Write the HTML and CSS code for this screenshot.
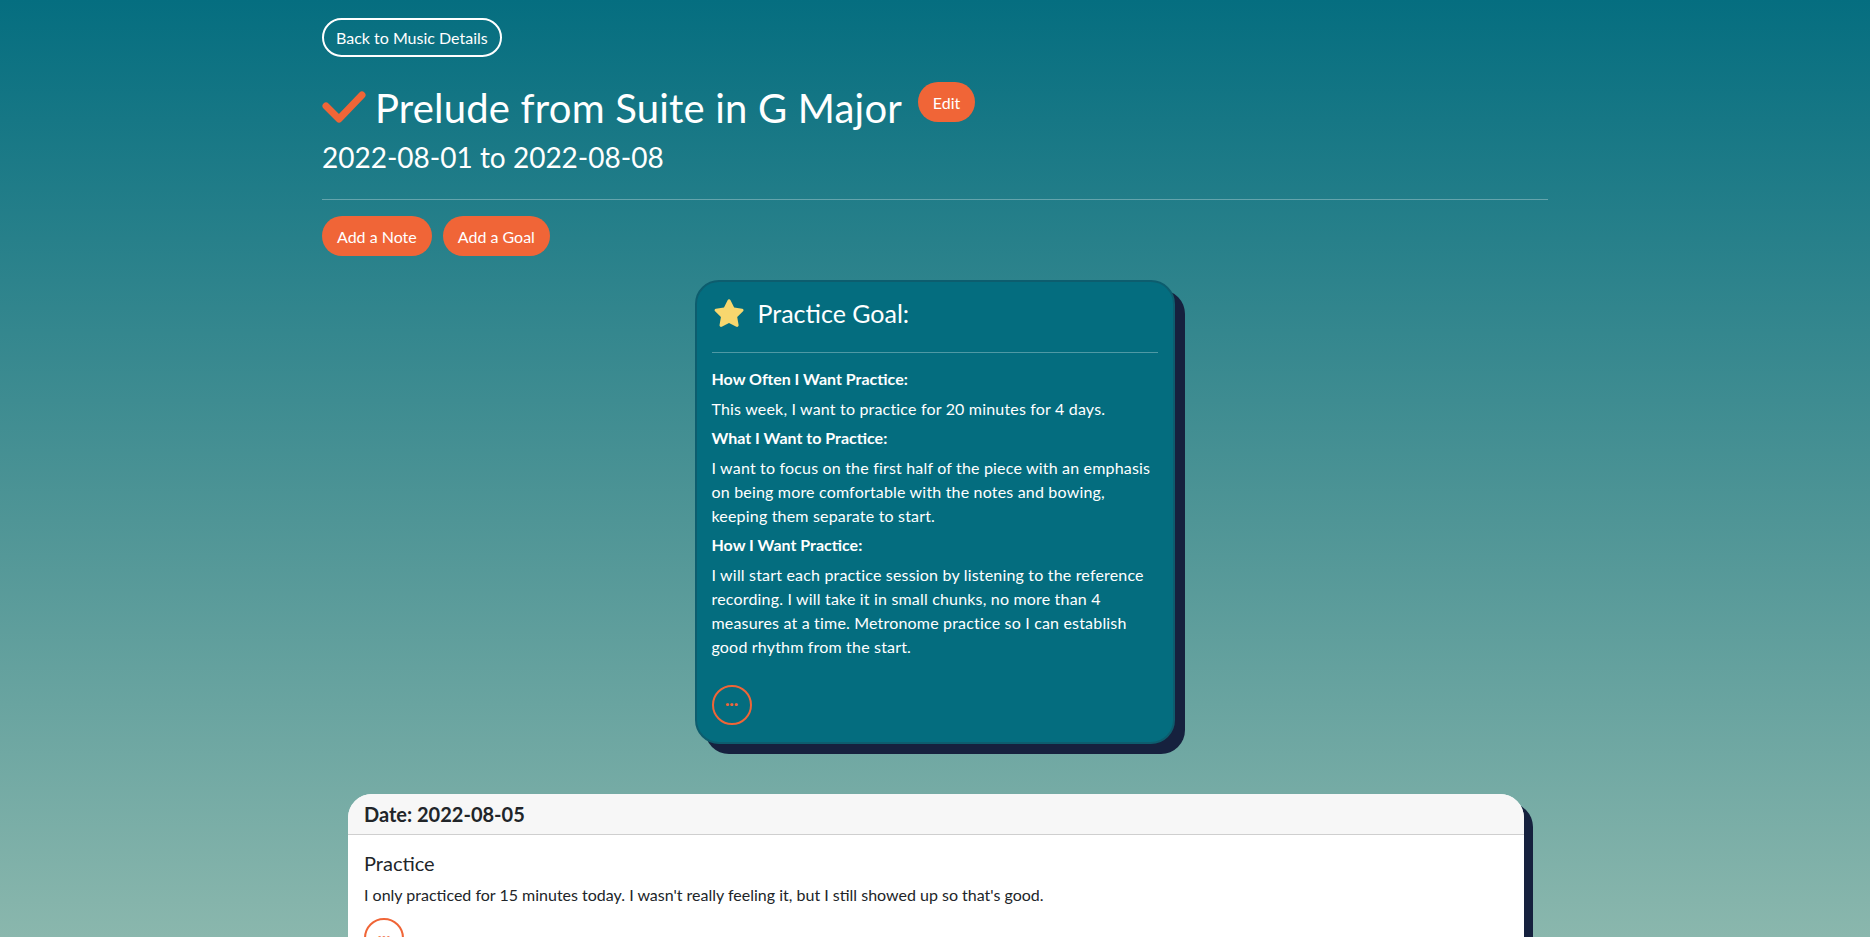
FILE: index.html
```html
<!DOCTYPE html>
<html lang="en">
<head>
<meta charset="utf-8">
<title>Prelude from Suite in G Major</title>
<link rel="stylesheet" href="styles.css">
</head>
<body>
<div class="page">
  <main class="container">
    <a class="btn-outline" href="#">Back to Music Details</a>
    <div class="title-row">
      <svg class="check" width="44" height="34" viewBox="0 0 44 34"><path d="M4 16 L17 29 L40 5" fill="none" stroke="#f06537" stroke-width="7" stroke-linecap="round" stroke-linejoin="round"/></svg>
      <h1 class="title">Prelude from Suite in G Major</h1>
      <a class="btn-orange edit" href="#">Edit</a>
    </div>
    <h2 class="dates">2022-08-01 to 2022-08-08</h2>
    <hr class="divider">
    <div class="actions">
      <a class="btn-orange action" href="#">Add a Note</a>
      <a class="btn-orange action" href="#">Add a Goal</a>
    </div>

    <section class="goal-wrap">
      <div class="goal-card">
        <div class="goal-head">
          <svg class="star" width="34" height="32" viewBox="0 0 24 23"><path d="M12 1.6c.5 0 .9.3 1.1.7l2.6 5.3 5.8.8c.9.1 1.3 1.3.6 1.9l-4.2 4.1 1 5.8c.2.9-.8 1.6-1.6 1.2L12 18.7l-5.2 2.7c-.8.4-1.8-.3-1.6-1.2l1-5.8L2 10.3c-.7-.6-.3-1.8.6-1.9l5.8-.8 2.6-5.3c.2-.4.6-.7 1-.7z" fill="#f8d76e"/></svg>
          <h3 class="goal-title">Practice Goal:</h3>
        </div>
        <hr class="goal-rule">
        <h4 class="goal-label">How Often I Want Practice:</h4>
        <p class="goal-text">This week, I want to practice for 20 minutes for 4 days.</p>
        <h4 class="goal-label">What I Want to Practice:</h4>
        <p class="goal-text">I want to focus on the first half of the piece with an emphasis on being more comfortable with the notes and bowing, keeping them separate to start.</p>
        <h4 class="goal-label">How I Want Practice:</h4>
        <p class="goal-text">I will start each practice session by listening to the reference recording. I will take it in small chunks, no more than 4 measures at a time. Metronome practice so I can establish good rhythm from the start.</p>
        <button class="dots" type="button">&middot;&middot;&middot;</button>
      </div>
    </section>

    <section class="note-card">
      <div class="note-head">Date: 2022-08-05</div>
      <div class="note-body">
        <h5 class="note-title">Practice</h5>
        <p class="note-text">I only practiced for 15 minutes today. I wasn't really feeling it, but I still showed up so that's good.</p>
        <button class="dots light" type="button">&middot;&middot;&middot;</button>
      </div>
    </section>
  </main>
</div>
</body>
</html>
```

FILE: styles.css
```css
* { box-sizing: border-box; }
html, body { margin: 0; padding: 0; }
body {
  font-family: "Lato", "Noto Sans", sans-serif;
  color: #fff;
  background: linear-gradient(180deg, #056e80 0px, #4f9596 520px, #8ab7ad 937px, #8ab7ad 100%);
  background-color: #8ab7ad;
}
.page { min-height: 100vh; }
.container {
  max-width: 1250px;
  margin: 0 auto;
  padding: 18px 12px 40px;
}
a { text-decoration: none; }
.btn-outline {
  display: inline-flex;
  align-items: center;
  height: 39px;
  padding: 0 12px;
  border: 2px solid #fff;
  border-radius: 20px;
  color: #fff;
  font-size: 16px;
}
.title-row {
  display: flex;
  align-items: flex-start;
  margin-top: 27px;
}
.check { margin-top: 6px; margin-right: 9px; flex: none; }
.title {
  margin: 0;
  font-size: 40px;
  font-weight: 400;
  line-height: 48px;
  letter-spacing: 0.2px;
}
.btn-orange {
  display: inline-flex;
  align-items: center;
  justify-content: center;
  background: #f06537;
  color: #fff;
  border-radius: 20px;
  font-size: 16px;
}
.edit { height: 40px; width: 57px; margin-left: 16px; margin-top: -2px; }
.dates {
  margin: 8px 0 0;
  font-size: 28px;
  font-weight: 400;
  line-height: 34px;
}
.divider {
  border: 0;
  border-top: 1px solid rgba(255,255,255,0.3);
  margin: 25px 0 16px;
}
.actions { display: flex; gap: 11px; }
.action { height: 40px; padding: 0 15px; }

.goal-wrap { display: flex; justify-content: center; margin-top: 24px; }
.goal-card {
  width: 480px;
  background: #046d7f;
  border: 2px solid #0d5d6e;
  border-radius: 24px;
  box-shadow: 10px 10px 0 #16213e;
  padding: 14px 15px 17px;
  margin-left: -1px;
}
.goal-head { display: flex; align-items: center; gap: 12px; }
.star { flex: none; }
.goal-title { margin: 0; font-size: 25px; font-weight: 400; line-height: 34px; }
.goal-rule {
  border: 0;
  border-top: 1px solid rgba(255,255,255,0.3);
  margin: 22px 0 14px;
}
.goal-label { margin: 0; font-size: 16px; font-weight: 700; line-height: 24px; }
.goal-text { margin: 6px 0 5px; font-size: 16px; line-height: 24px; letter-spacing: 0.18px; }
.dots {
  display: flex;
  align-items: center;
  justify-content: center;
  width: 40px;
  height: 40px;
  margin-top: 26px;
  border: 2px solid #f06537;
  border-radius: 50%;
  background: transparent;
  color: #f06537;
  font-size: 16px;
  font-weight: 700;
  line-height: 1;
  padding: 0 0 4px;
  font-family: inherit;
}

.note-card {
  margin: 50px 24px 0 26px;
  background: #fff;
  border-radius: 24px 24px 0 0;
  box-shadow: 9px 9px 0 #16213e;
  color: #212529;
}
.note-head {
  height: 41px;
  background: #f7f7f7;
  border-bottom: 1px solid #cfcfcf;
  border-radius: 24px 24px 0 0;
  padding: 0 16px;
  display: flex;
  align-items: center;
  font-size: 20px;
  font-weight: 700;
}
.note-body { padding: 15px 16px 20px; }
.note-title { margin: 0 0 8px; font-size: 20px; font-weight: 400; line-height: 26px; }
.note-text { margin: 0; font-size: 16px; line-height: 22px; }
.dots.light { margin-top: 12px; }
```
